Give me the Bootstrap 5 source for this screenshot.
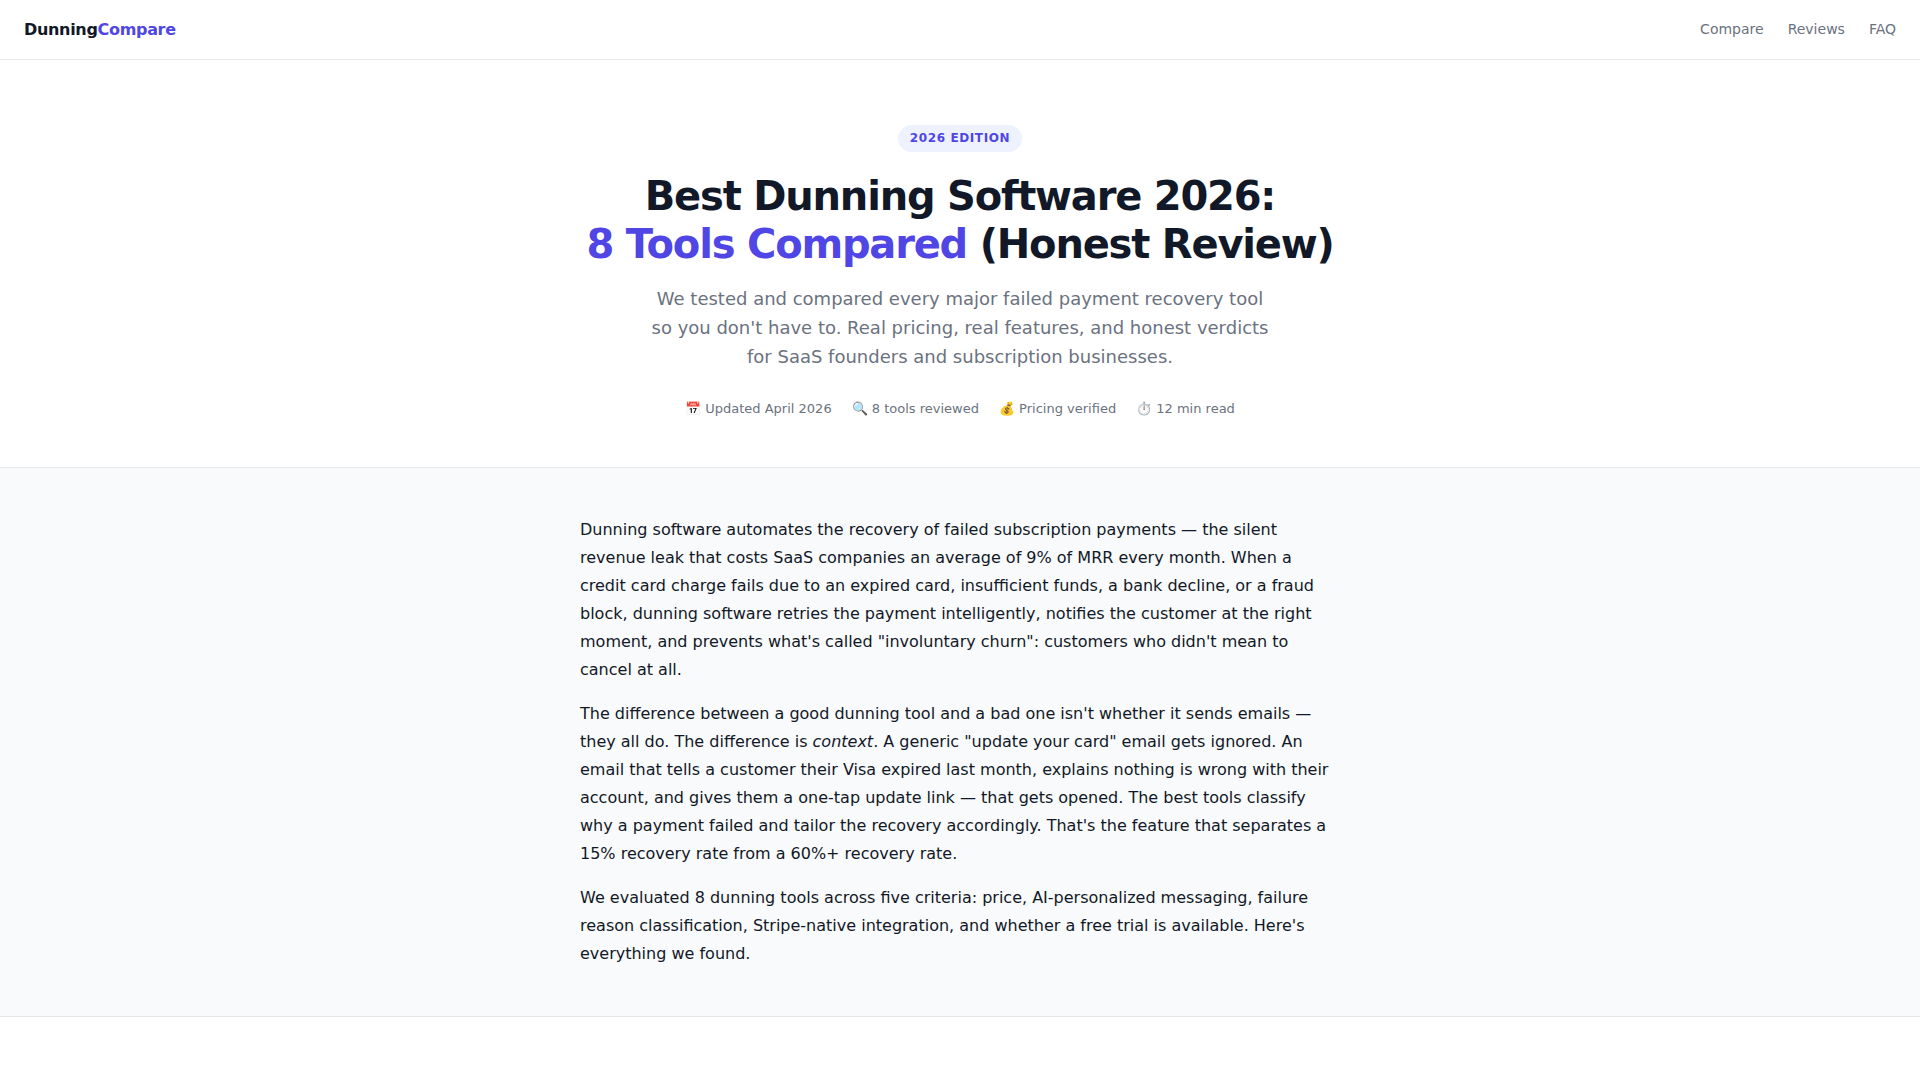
<!DOCTYPE html>
<html lang="en">
<head>
<meta charset="utf-8">
<meta name="viewport" content="width=device-width, initial-scale=1">
<title>Best Dunning Software 2026</title>
<link href="https://cdn.jsdelivr.net/npm/bootstrap@5.3.0/dist/css/bootstrap.min.css" rel="stylesheet">
<style>
body { font-family: "DejaVu Sans", sans-serif; color: #111827; line-height: 1.6; background: #fff; }
.site-nav { border-bottom: 1px solid #e5e7eb; height: 60px; }
.brand { font-size: 16px; font-weight: 700; letter-spacing: -0.02em; color: #111827; }
.accent { color: #4f46e5; }
.site-links { gap: 24px; font-size: 14px; }
.site-links a { color: #6b7280; }
.hero { padding: 64px 24px 48px; border-bottom: 1px solid #e5e7eb; }
.edition { background: #eef2ff; color: #4f46e5; font-size: 12px; font-weight: 600; letter-spacing: 0.05em; padding: 4px 12px; margin-bottom: 20px; }
.hero h1 { font-size: 40px; font-weight: 800; line-height: 48px; letter-spacing: -0.03em; margin-bottom: 16px; }
.sub { font-size: 18px; line-height: 29px; color: #6b7280; max-width: 620px; margin: 0 auto 28px; }
.facts { gap: 20px; font-size: 13px; line-height: 20px; color: #6b7280; }
.intro { background: #f9fafb; border-bottom: 1px solid #e5e7eb; padding: 48px 24px; }
.prose { max-width: 760px; margin: 0 auto; }
.prose p { font-size: 16px; line-height: 28px; margin-bottom: 16px; }
.prose p:last-child { margin-bottom: 0; }
</style>
</head>
<body>
<nav class="site-nav d-flex justify-content-between align-items-center px-4">
  <a class="brand text-decoration-none" href="#">Dunning<span class="accent">Compare</span></a>
  <div class="site-links d-flex">
    <a class="text-decoration-none" href="#compare">Compare</a>
    <a class="text-decoration-none" href="#reviews">Reviews</a>
    <a class="text-decoration-none" href="#faq">FAQ</a>
  </div>
</nav>
<header class="hero text-center">
  <span class="edition d-inline-block rounded-pill">2026 EDITION</span>
  <h1>Best Dunning Software 2026:<br><span class="accent">8 Tools Compared</span> (Honest Review)</h1>
  <p class="sub">We tested and compared every major failed payment recovery tool so you don't have to. Real pricing, real features, and honest verdicts for SaaS founders and subscription businesses.</p>
  <div class="facts d-flex flex-wrap justify-content-center">
    <span>📅 Updated April 2026</span>
    <span>🔍 8 tools reviewed</span>
    <span>💰 Pricing verified</span>
    <span>⏱️ 12 min read</span>
  </div>
</header>
<main>
<section class="intro">
  <div class="prose">
    <p>Dunning software automates the recovery of failed subscription payments — the silent revenue leak that costs SaaS companies an average of 9% of MRR every month. When a credit card charge fails due to an expired card, insufficient funds, a bank decline, or a fraud block, dunning software retries the payment intelligently, notifies the customer at the right moment, and prevents what's called "involuntary churn": customers who didn't mean to cancel at all.</p>
    <p>The difference between a good dunning tool and a bad one isn't whether it sends emails — they all do. The difference is <em>context</em>. A generic "update your card" email gets ignored. An email that tells a customer their Visa expired last month, explains nothing is wrong with their account, and gives them a one-tap update link — that gets opened. The best tools classify why a payment failed and tailor the recovery accordingly. That's the feature that separates a 15% recovery rate from a 60%+ recovery rate.</p>
    <p>We evaluated 8 dunning tools across five criteria: price, AI-personalized messaging, failure reason classification, Stripe-native integration, and whether a free trial is available. Here's everything we found.</p>
  </div>
</section>
</main>
<script src="https://cdn.jsdelivr.net/npm/bootstrap@5.3.0/dist/js/bootstrap.bundle.min.js"></script>
</body>
</html>
